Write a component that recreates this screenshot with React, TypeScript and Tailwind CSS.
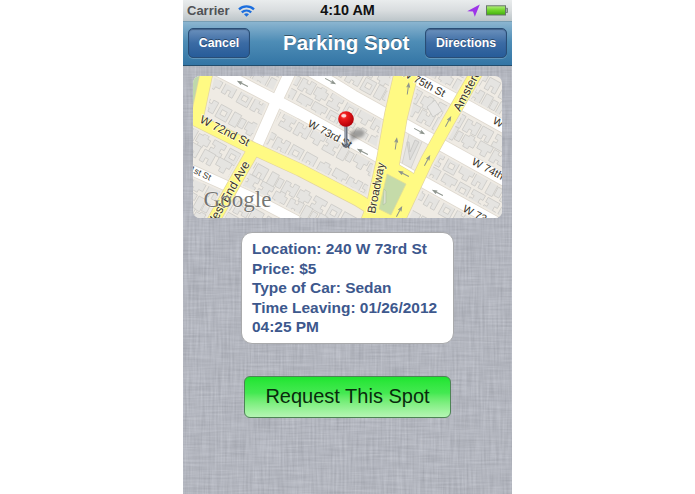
import type { ReactNode } from 'react';

const DETAILS = [
  'Location: 240 W 73rd St',
  'Price: $5',
  'Type of Car: Sedan',
  'Time Leaving: 01/26/2012',
  '04:25 PM',
];

// Building footprints, each drawn in a cell of about 14 x 14
const FOOTPRINTS = [
  'M0 0H12V5H9V9H12V13H0V8H3V5H0Z',
  'M0 1H5V4H8V0H13V12H8V9H5V13H0Z',
  'M0 0H11V12H7V7H4V12H0Z',
  'M1 0H12V13H1ZM4 4H9V9H4Z',
  'M0 2H4V0H9V3H12V10H8V13H3V10H0Z',
  'M0 0H7V13H0ZM8 2H13V11H8Z',
  'M0 0H13V6H10V12H5V8H0Z',
];

const ROWS = [-143, -128, -99, -83, -54, -39, -12, 10, 43, 58, 85, 100, 115];

const BUILDINGS = ROWS.flatMap((y, row) =>
  Array.from({ length: 22 }, (_, i) => ({
    x: -20 + i * 16.5 + ((row * 5) % 9),
    y: y + ((i * 3 + row) % 3),
    d: FOOTPRINTS[(i * 3 + row * 2 + ((i * row) % 4)) % FOOTPRINTS.length],
  })),
);

const STREETS = [
  { d: 'M24 -6L84 25L107 37L184 80L232 107L315 153', w: 11 },
  { d: 'M104 -13L139 7L160 20L252 71L315 106', w: 11.5 },
  { d: 'M205 -7L252 18L315 53', w: 12 },
  { d: 'M-6 92L34 110L64 124L104 145', w: 10 },
  { d: 'M61 76L84 24L100 -10', w: 11 },
];

const AVENUES = [
  { d: 'M14 -5L4 42', w: 12 },
  { d: 'M-3 41L59 72L107 94L165 124L200 146', w: 12 },
  { d: 'M61 73L46 99L18 149', w: 12 },
  { d: 'M285 -6L255 46L234 84L204 148', w: 12 },
];

const BROADWAY = 'M201 -2L192 37L184 82L173 131L168 144H211L215 120L226 102L218 96L206 89L214 42L225 -2Z';

const ARROWS = [
  { x: 50, y: 8, r: 207 },
  { x: 137, y: 5, r: 28 },
  { x: 170, y: 76, r: 207 },
  { x: 203, y: 68, r: -82 },
  { x: 215, y: 13, r: -82 },
  { x: 226, y: 55, r: 28 },
  { x: 255, y: 46, r: -62 },
  { x: 234, y: 85, r: -62 },
  { x: 211, y: 98, r: 207 },
  { x: 245, y: 117, r: 207 },
  { x: 206, y: 136, r: -62 },
];

const LABELS = [
  { text: 'W 72nd St', x: 6, y: 46, r: 27, size: 11.6 },
  { text: '1st St', x: -4, y: 95, r: 25, size: 8.8 },
  { text: 'West End Ave', x: 19, y: 154, r: -60, size: 12.2 },
  { text: 'W 73rd St', x: 114, y: 50, r: 28, size: 10.8 },
  { text: 'Broadway', x: 182, y: 138, r: -79, size: 11.6 },
  { text: 'W 75th St', x: 208, y: -1, r: 28, size: 10.8 },
  { text: 'Amsterd', x: 267, y: 36, r: -62, size: 12 },
  { text: 'W', x: 299, y: 47, r: 28, size: 10.8 },
  { text: 'W 74th', x: 278, y: 88, r: 28, size: 10.8 },
  { text: 'W 73', x: 269, y: 135, r: 28, size: 10.8 },
];

function Linen() {
  return (
    <svg className="absolute inset-0 h-full w-full" aria-hidden="true">
      <filter id="weft" x="0" y="0" width="100%" height="100%" colorInterpolationFilters="sRGB">
        <feTurbulence type="fractalNoise" baseFrequency="0.03 0.5" numOctaves="2" seed="4" />
        <feColorMatrix values="1 0 0 0 0.2  1 0 0 0 0.21  1 0 0 0 0.24  0 0 0 0 0.11" />
      </filter>
      <filter id="warp" x="0" y="0" width="100%" height="100%" colorInterpolationFilters="sRGB">
        <feTurbulence type="fractalNoise" baseFrequency="0.5 0.03" numOctaves="2" seed="9" />
        <feColorMatrix values="1 0 0 0 0.2  1 0 0 0 0.21  1 0 0 0 0.24  0 0 0 0 0.11" />
      </filter>
      <rect width="100%" height="100%" filter="url(#weft)" />
      <rect width="100%" height="100%" filter="url(#warp)" />
    </svg>
  );
}

function StatusBar() {
  return (
    <div className="grid h-[21px] shrink-0 grid-cols-3 items-center bg-linear-to-b from-[#e9eced] via-[#d9dddf] to-[#bcc5c9] px-1">
      <div className="flex items-center gap-2 pb-[2px] text-[13px] font-bold text-[#505255]">
        <span>Carrier</span>
        <svg width="17" height="12" viewBox="0 0 17 12" fill="none" stroke="#1c6ede" strokeWidth="2.3">
          <path d="M1 4.4C5.2 0.4 11.8 0.4 16 4.4" />
          <path d="M3.8 7.4C6.5 4.9 10.5 4.9 13.2 7.4" />
          <path d="M6 9.2Q8.5 7.3 11 9.2L8.5 11.8Z" fill="#1c6ede" stroke="none" />
        </svg>
      </div>
      <div className="pb-[2px] text-center text-[14.4px] font-bold whitespace-nowrap text-[#111]">4:10 AM</div>
      <div className="flex items-center justify-end gap-[6px] pb-[3px]">
        <svg width="13" height="13" viewBox="0 0 13 13">
          <path d="M12.8 0.5L0.2 7.2L6 7.6L7.8 12.8Z" fill="#9d35e8" />
        </svg>
        <svg width="22" height="11" viewBox="0 0 22 11">
          <defs>
            <linearGradient id="charge" x2="0" y2="1">
              <stop offset="0" stopColor="#b8ef83" />
              <stop offset="0.45" stopColor="#73d72e" />
              <stop offset="1" stopColor="#42af0d" />
            </linearGradient>
          </defs>
          <rect x="0.5" y="0.8" width="19" height="9.2" fill="url(#charge)" stroke="#66756a" />
          <path d="M20 3.3H21.5V7.5H20" fill="#a3adaa" stroke="#67716d" strokeWidth="0.8" />
        </svg>
      </div>
    </div>
  );
}

function NavButton({ children, className }: { children: ReactNode; className: string }) {
  return (
    <button
      className={`h-[30px] rounded-[5px] border border-[#294d75] bg-linear-to-b from-[#6b91bc] via-[#3b6ba4] via-50% to-[#275c99] text-[12.3px] font-bold text-white shadow-[inset_0_1px_1px_rgba(25,50,85,0.5),0_1px_0_rgba(255,255,255,0.2)] [text-shadow:0_-1px_0_rgba(0,0,0,0.4)] ${className}`}
    >
      {children}
    </button>
  );
}

function NavBar() {
  return (
    <div className="flex h-[45px] shrink-0 items-center border-t border-b border-t-[#789eb4] border-b-[#234d6c] bg-linear-to-b from-[#8bb5d0] via-[#4e8db6] via-45% to-[#3375a5] pr-[5px] pb-px pl-[5px]">
      <NavButton className="w-[62px]">Cancel</NavButton>
      <h1 className="ml-[33px] text-[20.5px] font-bold whitespace-nowrap text-white [text-shadow:0_-1px_0_rgba(0,0,0,0.45)]">
        Parking Spot
      </h1>
      <NavButton className="ml-auto w-[82px]">Directions</NavButton>
    </div>
  );
}

function StreetMap() {
  return (
    <svg className="ml-[10px] h-[142px] w-[309px] shrink-0 rounded-[7px]" viewBox="0 0 309 142">
      <defs>
        <radialGradient id="pinhead" cx="0.36" cy="0.3" r="0.7">
          <stop offset="0" stopColor="#ff8d85" />
          <stop offset="0.3" stopColor="#ee1c1c" />
          <stop offset="1" stopColor="#b30008" />
        </radialGradient>
        <filter id="soft" x="-50%" y="-50%" width="200%" height="200%">
          <feGaussianBlur stdDeviation="1.6" />
        </filter>
      </defs>
      <rect width="309" height="142" fill="#efebe4" />

      {/* Buildings follow the street grid */}
      <g transform="rotate(29)" fill="#e5e4e1" stroke="#cbcac6" strokeWidth="0.7" fillRule="evenodd">
        {BUILDINGS.map((b, i) => (
          <path key={i} d={b.d} transform={`translate(${b.x} ${b.y}) scale(1.12 1.05)`} />
        ))}
      </g>

      {/* Kerbs */}
      <g fill="none" stroke="#efebe4">
        {[...STREETS, ...AVENUES].map((s) => (
          <path key={s.d} d={s.d} strokeWidth={s.w + 5} />
        ))}
        <path d={BROADWAY} strokeWidth="5" />
      </g>
      <path d="M0 0H8L1 32H0Z" fill="#bfd8ab" />
      <path d="M214 51L236 62L220 97L206 90Z" fill="#efebe4" />
      <path d="M217 54L231 61L218 92L209 88Z" fill="#e5e4e1" stroke="#cbcac6" strokeWidth="0.7" />
      <path d="M214 66L217 84L226 66L222 64L217 76L216 66Z" fill="#dddcda" stroke="#c2c1be" strokeWidth="0.7" />
      <path d="M234 31L242 24L249 35L240 41Z" fill="#e8e7e5" stroke="#c2c1be" strokeWidth="0.7" />

      {/* Streets */}
      <g fill="none" stroke="#dfd9cf">
        {STREETS.map((s) => (
          <path key={s.d} d={s.d} strokeWidth={s.w + 1.6} />
        ))}
      </g>
      <g fill="none" stroke="#fff">
        {STREETS.map((s) => (
          <path key={s.d} d={s.d} strokeWidth={s.w} />
        ))}
      </g>
      <g fill="none" stroke="#e3d5a0">
        {AVENUES.map((s) => (
          <path key={s.d} d={s.d} strokeWidth={s.w + 1.4} />
        ))}
        <path d={BROADWAY} strokeWidth="1.4" />
      </g>
      <g fill="none" stroke="#fffa83">
        {AVENUES.map((s) => (
          <path key={s.d} d={s.d} strokeWidth={s.w} />
        ))}
      </g>
      <path d={BROADWAY} fill="#fffa83" />
      <path d="M194 98L213 108L198 139L186 133Z" fill="#c5dba9" stroke="#e2dd96" strokeWidth="0.8" />
      <path d="M191 113L190 129L193 127V115Z" fill="#d9e0cd" stroke="#b1c49f" strokeWidth="0.7" />

      <g fill="none" stroke="#8c938c" strokeWidth="1">
        {ARROWS.map((a) => (
          <path key={`${a.x}-${a.y}`} d="M-5.5 0H5M1.5 -1.5L5.5 0L1.5 1.5" transform={`translate(${a.x} ${a.y}) rotate(${a.r})`} />
        ))}
      </g>

      <g fill="#383329" stroke="#fff" strokeOpacity="0.6" strokeWidth="1.5" paintOrder="stroke">
        {LABELS.map((l) => (
          <text key={`${l.text}-${l.x}`} fontSize={l.size} transform={`translate(${l.x} ${l.y}) rotate(${l.r})`}>
            {l.text}
          </text>
        ))}
      </g>

      <text
        x="10.5"
        y="131"
        fontSize="22.5"
        textLength="68"
        lengthAdjust="spacingAndGlyphs"
        className="font-['Liberation_Serif',serif]"
        fill="#5f5f5c"
        fillOpacity="0.85"
        stroke="#fff"
        strokeOpacity="0.6"
        strokeWidth="1"
        paintOrder="stroke"
      >
        Google
      </text>

      {/* Pin */}
      <path d="M153 70L162 60" stroke="#444" strokeOpacity="0.35" strokeWidth="3" filter="url(#soft)" />
      <ellipse cx="164" cy="58" rx="8" ry="4.5" fill="#444" fillOpacity="0.45" transform="rotate(-12 164 58)" filter="url(#soft)" />
      <path d="M149.8 67.5Q150 71 153 71Q156 71 156.2 67.5" fill="none" stroke="#55585f" strokeWidth="1.3" />
      <path d="M153 49V70" stroke="#646d7b" strokeWidth="3" strokeLinecap="round" />
      <path d="M152.6 50V68" stroke="#b0b8c3" strokeWidth="0.8" />
      <circle cx="153" cy="43" r="7.8" fill="url(#pinhead)" />
      <ellipse cx="150.8" cy="39.7" rx="2.6" ry="1.8" fill="#fff" fillOpacity="0.75" />
    </svg>
  );
}

export default function App() {
  return (
    <div className="flex h-[494px] w-[695px] justify-center bg-white font-['Liberation_Sans',Arial,sans-serif]">
      <main className="relative flex w-[329px] flex-col overflow-hidden bg-[#b3b6bf]">
        <Linen />
        <div className="relative flex flex-col">
          <StatusBar />
          <NavBar />
          <div className="flex flex-col pt-[10px]">
            <StreetMap />
            <div className="mt-[14px] ml-[58px] h-[112px] w-[213px] rounded-[11px] border border-[#a9aaac] bg-white px-[10px] pt-[6px] text-[15.45px] leading-[19.6px] font-bold whitespace-nowrap text-[#3d588d]">
              {DETAILS.map((line) => (
                <p key={line}>{line}</p>
              ))}
            </div>
            <button className="mt-[32px] ml-[61px] h-[42px] w-[207px] rounded-[6px] border border-[#4d8555] bg-linear-to-b from-[#1ce52e] via-[#43e951] via-40% to-[#b5f5b4] pb-[2px] text-[20px] text-[#082b0c]">
              Request This Spot
            </button>
          </div>
        </div>
      </main>
    </div>
  );
}
